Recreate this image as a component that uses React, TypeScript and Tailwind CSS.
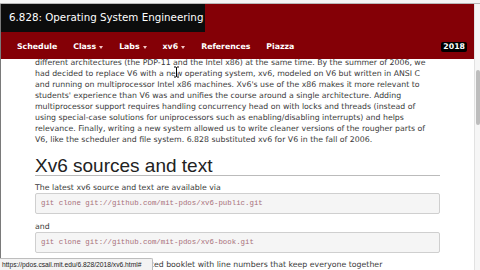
import React from "react";

const bodyLines = [
  "different architectures (the PDP-11 and the Intel x86) at the same time. By the summer of 2006, we",
  "had decided to replace V6 with a new operating system, xv6, modeled on V6 but written in ANSI C",
  "and running on multiprocessor Intel x86 machines. Xv6's use of the x86 makes it more relevant to",
  "students' experience than V6 was and unifies the course around a single architecture. Adding",
  "multiprocessor support requires handling concurrency head on with locks and threads (instead of",
  "using special-case solutions for uniprocessors such as enabling/disabling interrupts) and helps",
  "relevance. Finally, writing a new system allowed us to write cleaner versions of the rougher parts of",
  "V6, like the scheduler and file system. 6.828 substituted xv6 for V6 in the fall of 2006.",
];

function Caret() {
  return (
    <span className="inline-block ml-[3px] align-middle w-0 h-0 border-l-[2px] border-r-[2px] border-t-[3px] border-l-transparent border-r-transparent border-t-[#f3c6c6]" />
  );
}

export default function App() {
  const verdana = { fontFamily: '"DejaVu Sans", Verdana, sans-serif' };
  return (
    <div className="relative w-[480px] h-[270px] overflow-hidden bg-white">
      <div className="h-[4px] bg-[#f4f4f4] border-b border-[#b8b8b8]" />
      <div className="flex h-[266px]">
        <div className="w-[474px] flex flex-col border-l border-[#7a7a7a] overflow-hidden">
          <header className="relative z-10 h-[55px] shrink-0 bg-[#840006] flex flex-col" style={verdana}>
            <div className="h-[28px] w-[204px] bg-[#0c0c0c] flex items-center pl-[8px] text-white text-[10.3px] whitespace-nowrap">
              6.828: Operating System Engineering
            </div>
            <nav className="flex items-center h-[27px] pt-[3px] pl-[16px] pr-[7px] gap-[16px] font-bold text-white text-[7.8px] whitespace-nowrap">
              <span>Schedule</span>
              <span>Class<Caret /></span>
              <span>Labs<Caret /></span>
              <span>xv6<Caret /></span>
              <span>References</span>
              <span>Piazza</span>
              <span className="ml-auto bg-black rounded-[2px] px-[2px] leading-[10px]">2018</span>
            </nav>
          </header>
          <main className="-mt-[2px] pl-[34px] text-[#3a3a3a]">
            <div className="text-[7.8px] leading-[11px]" style={verdana}>
              {bodyLines.map((l, i) => (
                <div key={i} className="whitespace-nowrap">{l}</div>
              ))}
            </div>
            <h2
              className="mt-[12px] w-[405px] text-[19px] leading-[18px] text-[#222] border-b border-[#bbbbbb]"
              style={{ fontFamily: '"Liberation Sans", Arial, sans-serif' }}
            >
              Xv6 sources and text
            </h2>
            <div className="mt-[6px] text-[7.8px] leading-[11px] whitespace-nowrap" style={verdana}>
              The latest xv6 source and text are available via
            </div>
            <div
              className="w-[405px] h-[21px] flex items-center pl-[5px] border border-[#cfcfcf] bg-[#f5f5f5] rounded-[2px] text-[7.4px] text-[#a8707a] whitespace-nowrap"
              style={{ fontFamily: '"Liberation Mono", "Courier New", monospace' }}
            >
              git clone git://github.com/mit-pdos/xv6-public.git
            </div>
            <div className="mt-[7px] text-[7.8px] leading-[11px]" style={verdana}>and</div>
            <div
              className="w-[405px] h-[21px] flex items-center pl-[5px] border border-[#cfcfcf] bg-[#f5f5f5] rounded-[2px] text-[7.4px] text-[#a8707a] whitespace-nowrap"
              style={{ fontFamily: '"Liberation Mono", "Courier New", monospace' }}
            >
              git clone git://github.com/mit-pdos/xv6-book.git
            </div>
            <div className="mt-[6px] text-[7.8px] leading-[11px] whitespace-nowrap" style={verdana}>
              Xv6 is also available as a printed booklet with line numbers that keep everyone together
            </div>
          </main>
        </div>
        <div className="w-[6px] bg-[#f6f6f6] border-l border-[#e2e2e2] flex flex-col">
          <div className="h-[66px]" />
          <div className="mx-auto w-[4px] h-[55px] rounded-[2px] bg-[#bdbdbd]" />
        </div>
      </div>
      {/* text cursor */}
      <svg className="absolute left-[173px] top-[66px]" width="7" height="12" viewBox="0 0 7 12">
        <path d="M1 1h2l.5.5.5-.5h2M3.5 1.5v9M1 11h2l.5-.5.5.5h2" fill="none" stroke="#fff" strokeWidth="2" />
        <path d="M1 1h2l.5.5.5-.5h2M3.5 1.5v9M1 11h2l.5-.5.5.5h2" fill="none" stroke="#000" strokeWidth="1" />
      </svg>
      {/* status bubble */}
      <div
        className="absolute left-0 bottom-0 h-[12px] w-[153px] bg-[#f3f3f3] border-t border-r border-[#bdbdbd] rounded-tr-[2px] pl-[2px] text-[6.7px] leading-[11px] text-[#222] whitespace-nowrap overflow-hidden"
        style={{ fontFamily: '"Liberation Sans", Arial, sans-serif' }}
      >
        https://pdos.csail.mit.edu/6.828/2018/xv6.html#
      </div>
    </div>
  );
}
